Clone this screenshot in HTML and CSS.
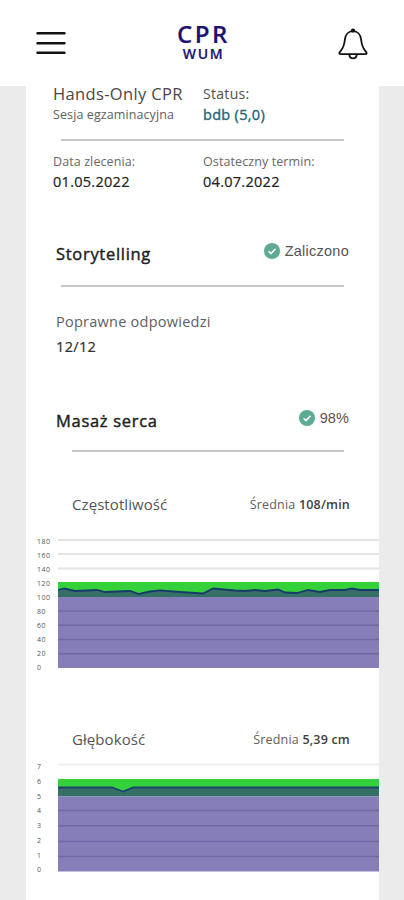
FILE: index.html
```html
<!DOCTYPE html>
<html lang="pl">
<head>
<meta charset="utf-8">
<title>CPR WUM</title>
<link rel="stylesheet" href="styles.css">
</head>
<body>
<header class="topbar">
  <svg class="menu" width="30" height="24" viewBox="0 0 30 24" fill="none" stroke="#111" stroke-width="2.4" stroke-linecap="round"><path d="M1.5 2.3h27M1.5 12.2h27M1.5 21.7h27"/></svg>
  <div class="logo"><div class="logo-top">CPR</div><div class="logo-sub">WUM</div></div>
  <svg class="bell" width="30" height="32" viewBox="0 0 30 32" fill="none" stroke="#111" stroke-width="1.8" stroke-linejoin="round" stroke-linecap="round"><path d="M15 3.2C10.300 3.200 7.400 6.800 6.900 11.500C6.300 17.500 5.300 20 2.700 22.800C.6 25.200 1 26.200 3 26.200H27C29 26.200 29.400 25.200 27.300 22.800C24.700 20 23.700 17.500 23.100 11.500C22.600 6.800 19.700 3.200 15 3.200Z"/><path d="M11.300 26.600C11.700 31.700 18.300 31.700 18.700 26.600"/><circle cx="15" cy="2.600" r="2.100" fill="#111" stroke="none"/></svg>
</header>
<main class="card">
  <section class="summary">
    <div><div class="name">Hands-Only CPR</div><div class="kind">Sesja egzaminacyjna</div></div>
    <div><div class="status">Status:</div><div class="grade">bdb (5,0)</div></div>
  </section>
  <hr class="rule">
  <section class="dates">
    <div><div class="label">Data zlecenia:</div><div class="date">01.05.2022</div></div>
    <div><div class="label term">Ostateczny termin:</div><div class="date">04.07.2022</div></div>
  </section>
  <section class="head story">
    <h2>Storytelling</h2>
    <div class="result"><svg width="16" height="16" viewBox="0 0 16 16"><circle cx="8" cy="8" r="8" fill="#5eaa94"/><path d="M4.600 8.300L7 10.600L11.500 5.700" fill="none" stroke="#fff" stroke-width="1.500"/></svg><span class="passed">Zaliczono</span></div>
  </section>
  <hr class="rule">
  <section class="answers"><div class="answers-label">Poprawne odpowiedzi</div><div class="score">12/12</div></section>
  <section class="head massage">
    <h2>Masaż serca</h2>
    <div class="result"><svg width="16" height="16" viewBox="0 0 16 16"><circle cx="8" cy="8" r="8" fill="#5eaa94"/><path d="M4.600 8.300L7 10.600L11.500 5.700" fill="none" stroke="#fff" stroke-width="1.500"/></svg><span class="percent">98%</span></div>
  </section>
  <hr class="rule inset">
  <section class="metric rate"><h3>Częstotliwość</h3><p>Średnia <b>108/min</b></p></section>
  <svg class="chart" width="353" height="145" viewBox="0 0 353 145">
    <path d="M32 10H353M32 24H353M32 38.500H353" stroke="#e4e4e4" stroke-width="2"/>
    <path d="M32 52H353V67H32Z" fill="#35d13b"/>
    <path d="M32 60L38 58.500L49 61L71 60L79 62L104 61L113 64L124 61.500L134 60.300L154 62L177 63.500L187 58.500L209 60.500L219 61L229 60L239 61L252 59.500L259 62.500L271 63L282 60L294 62L304 60L319 60L326 58.500L334 60H353V67H32Z" fill="#366f66"/>
    <path d="M32 67H353V138H32Z" fill="#857eb8"/>
    <path d="M32 81H353M32 95.300H353M32 109.500H353M32 123.700H353" stroke="#7169a7" stroke-width="1.400"/>
    <path d="M32 60L38 58.500L49 61L71 60L79 62L104 61L113 64L124 61.500L134 60.300L154 62L177 63.500L187 58.500L209 60.500L219 61L229 60L239 61L252 59.500L259 62.500L271 63L282 60L294 62L304 60L319 60L326 58.500L334 60H353" fill="none" stroke="#173a6b" stroke-width="1.800"/>
    <g class="ticks"><text x="11" y="14">180</text><text x="11" y="28">160</text><text x="11" y="42">140</text><text x="11" y="56">120</text><text x="11" y="70">100</text><text x="11" y="84">80</text><text x="11" y="98">60</text><text x="11" y="112">40</text><text x="11" y="126">20</text><text x="11" y="139.500">0</text></g>
  </svg>
  <section class="metric depth"><h3>Głębokość</h3><p>Średnia <b>5,39 cm</b></p></section>
  <svg class="chart" width="353" height="120" viewBox="0 0 353 120">
    <path d="M32 9.500H353" stroke="#f0f0f0" stroke-width="2"/>
    <path d="M32 24H353V41H32Z" fill="#35d13b"/>
    <path d="M32 32H86L97 36.500L107 32H353V41.500H32Z" fill="#366f66"/>
    <path d="M32 41.500H353V116.500H32Z" fill="#857eb8"/>
    <path d="M32 55.500H353M32 70.700H353M32 86.500H353M32 101.500H353" stroke="#7169a7" stroke-width="1.400"/>
    <path d="M32 32.500H86L97 36.500L107 32.500H353" fill="none" stroke="#1b446d" stroke-width="1.800"/>
    <g class="ticks"><text x="11" y="14">7</text><text x="11" y="28.500">6</text><text x="11" y="43.500">5</text><text x="11" y="58">4</text><text x="11" y="73">3</text><text x="11" y="87.500">2</text><text x="11" y="102.500">1</text><text x="11" y="117">0</text></g>
  </svg>
</main>
</body>
</html>
```
FILE: styles.css
```css
* { box-sizing: border-box; margin: 0; padding: 0; }
body { width: 404px; height: 900px; background: #ebebeb; color: #333; font-family: "Open Sans", "Noto Sans", sans-serif; line-height: 20px; }
.topbar { display: flex; justify-content: space-between; align-items: flex-start; height: 86px; padding: 0 36px; background: #fff; }
.menu { margin-top: 31px; }
.bell { margin-top: 28px; }
.logo { padding: 21px 0 0 3px; color: #1c1272; text-align: center; }
.logo-top { font-size: 24px; font-weight: 600; line-height: 25px; letter-spacing: 2.5px; -webkit-text-stroke: .2px; }
.logo-sub { font-size: 14px; font-weight: 600; line-height: 16px; letter-spacing: 1.6px; -webkit-text-stroke: .2px; }
.card { width: 353px; height: 814px; margin-left: 26px; background: #fff; white-space: nowrap; }
.summary, .dates { display: grid; grid-template-columns: 150px 1fr; padding-left: 27px; }
.summary { height: 53px; }
.name { line-height: 15px; font-size: 16.5px; letter-spacing: .35px; color: #484848; }
.kind { margin-top: 4px; font-size: 12.5px; letter-spacing: .1px; color: #606060; }
.status { line-height: 15px; font-size: 14px; letter-spacing: .3px; color: #505050; }
.grade { margin-top: 4px; font-size: 14.5px; letter-spacing: .3px; color: #216475; -webkit-text-stroke: .35px; }
.rule { width: 283px; height: 2px; margin-left: 35px; border: 0; background: #c8c8c8; }
.dates { padding-top: 11px; }
.label { font-size: 12.5px; letter-spacing: .1px; color: #686868; }
.date { font-size: 14.5px; letter-spacing: .28px; color: #222; -webkit-text-stroke: .2px; }
.head { display: flex; justify-content: space-between; padding: 0 30px; }
h2 { font-size: 16.5px; font-weight: 400; letter-spacing: .7px; color: #202020; -webkit-text-stroke: .4px; }
.result { display: flex; align-items: center; gap: 5px; height: 16px; font-family: "Liberation Sans", Arial, sans-serif; font-size: 14.5px; color: #555; }
.passed { letter-spacing: .25px; }
.percent { letter-spacing: .1px; }
.story { height: 41px; margin-top: 52px; }
.story .result { margin-top: -1px; }
.answers { padding: 25px 0 0 30px; height: 77px; }
.answers-label { font-size: 14.5px; letter-spacing: .25px; color: #606060; }
.score { margin-top: 5px; font-size: 14.5px; letter-spacing: .35px; color: #303030; -webkit-text-stroke: .2px; }
.massage { margin-top: 46px; height: 40px; }
.massage h2 { margin-top: 1px; }
.inset { width: 272px; margin-left: 46px; }
.metric { display: flex; justify-content: space-between; padding: 0 29px 0 46px; }
h3 { font-size: 15px; font-weight: 400; letter-spacing: .08px; color: #555; }
.metric p { margin-top: 1px; font-size: 12.5px; color: #606060; letter-spacing: .2px; }
.metric b { font-weight: 600; color: #404040; }
.rate { margin-top: 42px; height: 36px; }
.depth { margin-top: 54px; height: 26px; }
.chart { display: block; }
.ticks { font-size: 7px; letter-spacing: .5px; fill: #555; }
```
